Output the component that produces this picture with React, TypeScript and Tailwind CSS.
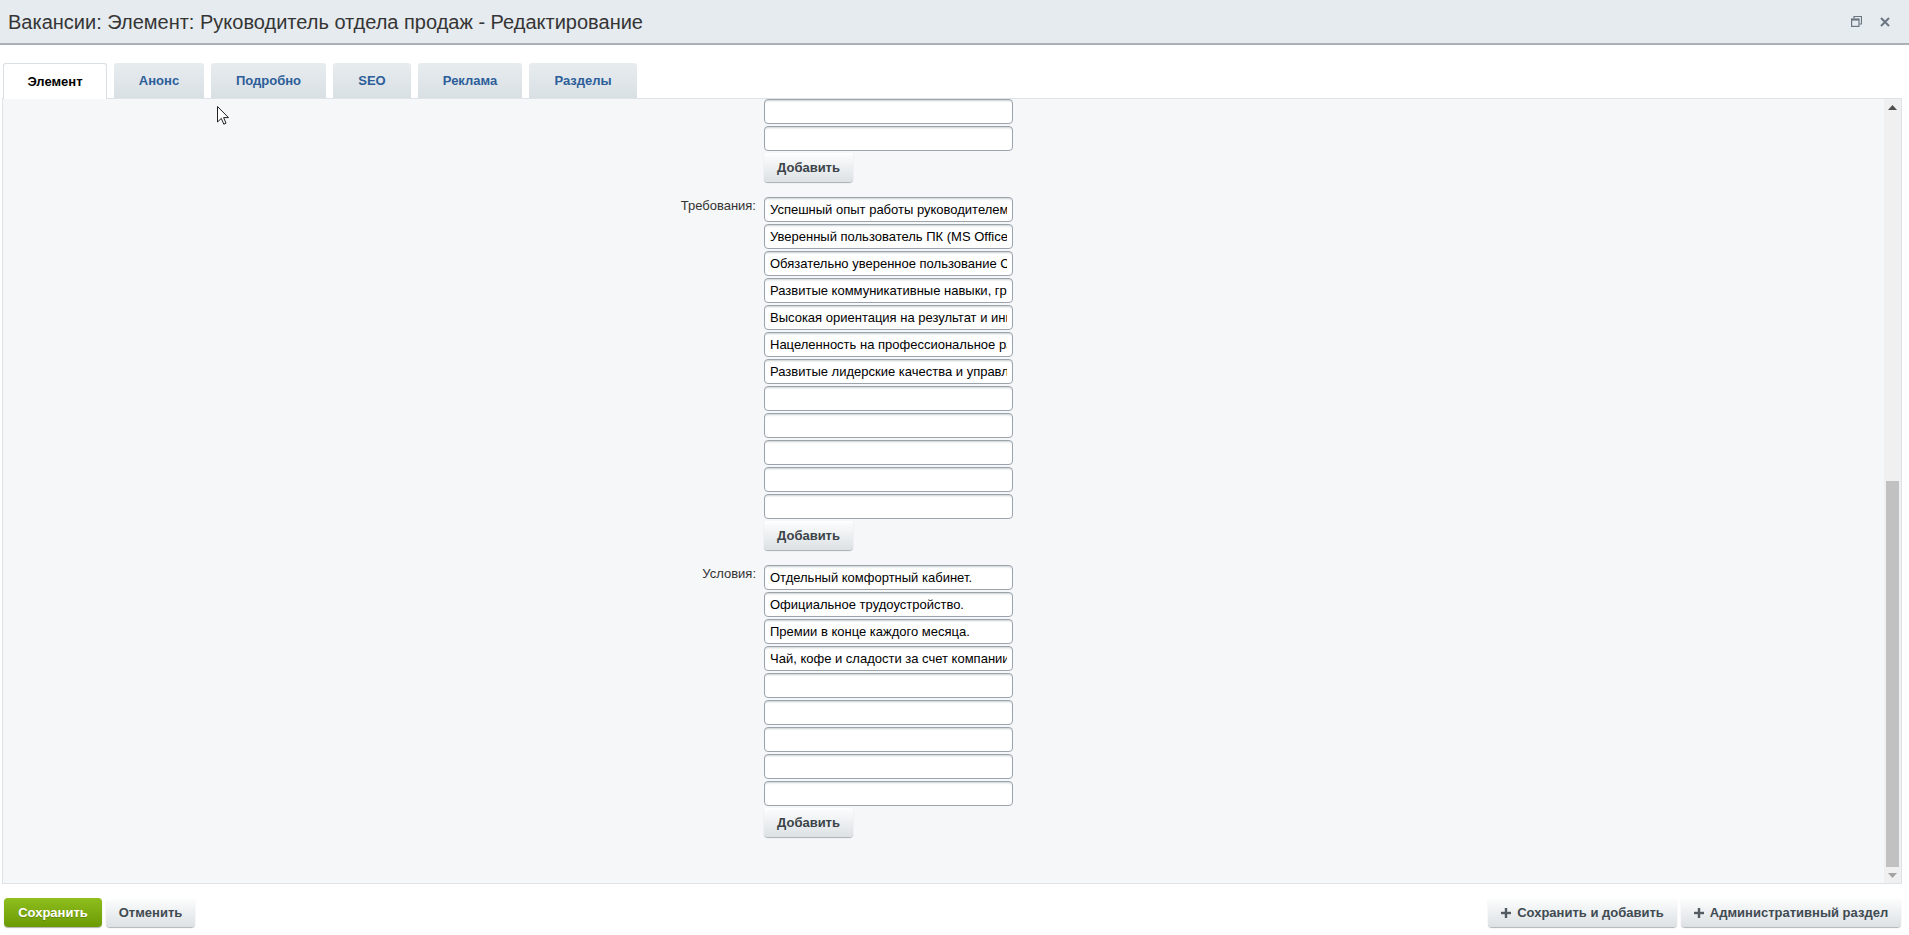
import React from "react";

const tabs = [
  { title: "Элемент", width: 104, active: true },
  { title: "Анонс", width: 90 },
  { title: "Подробно", width: 115 },
  { title: "SEO", width: 78 },
  { title: "Реклама", width: 104 },
  { title: "Разделы", width: 108 },
];

const requirements = [
  "Успешный опыт работы руководителем отдела продаж от 2 лет",
  "Уверенный пользователь ПК (MS Office, Excel)",
  "Обязательно уверенное пользование CRM-системами",
  "Развитые коммуникативные навыки, грамотная речь",
  "Высокая ориентация на результат и инициативность",
  "Нацеленность на профессиональное развитие",
  "Развитые лидерские качества и управленческие навыки",
  "",
  "",
  "",
  "",
  "",
];

const conditions = [
  "Отдельный комфортный кабинет.",
  "Официальное трудоустройство.",
  "Премии в конце каждого месяца.",
  "Чай, кофе и сладости за счет компании",
  "",
  "",
  "",
  "",
  "",
];

function Field({ value }: { value: string }) {
  return (
    <input
      type="text"
      readOnly
      defaultValue={value}
      className="mb-[2px] block h-[25px] w-[249px] rounded-[4px] border border-[#9ba4ad] bg-white px-[5px] text-[13px] text-black shadow-[inset_0_2px_2px_-1px_rgba(180,188,191,0.7)] outline-none"
    />
  );
}

function AddButton() {
  return (
    <button className="mt-[1px] mb-[15px] flex h-[29px] w-[89px] items-center justify-center rounded-[4px] bg-gradient-to-b from-[#fdfefe] to-[#dce1e4] text-[13px] font-bold text-[#3b4348] shadow-[0_1px_1px_rgba(0,0,0,0.3),inset_0_1px_0_#fff]">
      Добавить
    </button>
  );
}

function Section({ label, values }: { label: string; values: string[] }) {
  return (
    <div className="grid grid-cols-[753px_249px] gap-x-[8px]">
      <div className="pt-[1px] text-right text-[13px] leading-[15px] text-[#333]">{label}</div>
      <div>
        {values.map((v, i) => (
          <Field key={i} value={v} />
        ))}
        <AddButton />
      </div>
    </div>
  );
}

function Plus() {
  return (
    <svg width="10" height="10" viewBox="0 0 10 10" className="shrink-0">
      <rect x="3.8" y="0" width="2.4" height="10" fill="#535c63" />
      <rect x="0" y="3.8" width="10" height="2.4" fill="#535c63" />
    </svg>
  );
}

export default function App() {
  return (
    <div
      className="relative flex h-[935px] w-[1909px] flex-col overflow-hidden bg-white"
      style={{ fontFamily: '"Liberation Sans", Arial, sans-serif' }}
    >
      {/* title bar */}
      <div className="flex h-[45px] shrink-0 items-center justify-between border-b-2 border-[#aab0b5] bg-[#e5ebef] pl-[8px] pr-[19px]">
        <h1 className="text-[20px] leading-none text-[#353535]">
          Вакансии: Элемент: Руководитель отдела продаж - Редактирование
        </h1>
        <div className="flex items-center gap-[18px]">
          <svg width="11" height="11" viewBox="0 0 11 11">
            <path d="M3 2.5V0.5H10.5V8H8.5" fill="none" stroke="#6c7681" strokeWidth="1.2" />
            <rect x="0.6" y="3" width="7.4" height="7.4" fill="none" stroke="#6c7681" strokeWidth="1.2" />
            <rect x="0.6" y="3" width="7.4" height="1.6" fill="#6c7681" />
          </svg>
          <svg width="10" height="10" viewBox="0 0 10 10">
            <path d="M1 1L9 9M9 1L1 9" stroke="#6c7681" strokeWidth="2" />
          </svg>
        </div>
      </div>

      {/* tabs */}
      <div className="mt-[18px] flex h-[35px] shrink-0 items-end gap-[7px] pl-[3px]">
        {tabs.map((t) =>
          t.active ? (
            <div
              key={t.title}
              style={{ width: t.width }}
              className="relative z-10 -mb-[1px] flex h-[36px] items-center justify-center rounded-t-[3px] border border-b-0 border-[#d9dfe3] bg-white text-[13px] font-bold text-black"
            >
              {t.title}
            </div>
          ) : (
            <div
              key={t.title}
              style={{ width: t.width }}
              className="flex h-[35px] items-center justify-center rounded-t-[3px] bg-gradient-to-b from-[#e7ecef] to-[#d9e0e4] text-[13px] font-bold text-[#2d5e99]"
            >
              {t.title}
            </div>
          )
        )}
      </div>

      {/* content */}
      <div className="ml-[2px] mr-[7px] flex h-[786px] shrink-0 border border-[#dde3e7] bg-[#f5f7f9]">
        <div className="flex-1 overflow-hidden">
          <Section label="" values={["", ""]} />
          <Section label="Требования:" values={requirements} />
          <Section label="Условия:" values={conditions} />
        </div>
        <div className="flex w-[17px] flex-col bg-[#f0f0f0]">
          <div className="flex h-[17px] items-center justify-center">
            <svg width="9" height="5" viewBox="0 0 9 5">
              <path d="M0 5L4.5 0L9 5Z" fill="#505050" />
            </svg>
          </div>
          <div className="flex-1" />
          <div className="mx-[2px] h-[386px] bg-[#c1c1c1]" />
          <div className="flex h-[16px] items-center justify-center">
            <svg width="9" height="5" viewBox="0 0 9 5">
              <path d="M0 0L4.5 5L9 0Z" fill="#a3a3a3" />
            </svg>
          </div>
        </div>
      </div>

      {/* footer */}
      <div className="mt-[14px] flex items-start justify-between pl-[4px] pr-[8px]">
        <div className="flex gap-[4px]">
          <button className="flex h-[29px] w-[98px] items-center justify-center rounded-[4px] bg-gradient-to-b from-[#8fbe1d] to-[#6b9a03] text-[13px] font-bold text-white shadow-[0_1px_1px_rgba(0,0,0,0.3)] [text-shadow:0_1px_rgba(0,0,0,0.2)]">
            Сохранить
          </button>
          <button className="flex h-[29px] w-[89px] items-center justify-center rounded-[4px] bg-gradient-to-b from-[#fdfefe] to-[#dce1e4] text-[13px] font-bold text-[#3f4a51] shadow-[0_1px_1px_rgba(0,0,0,0.3),inset_0_1px_0_#fff]">
            Отменить
          </button>
        </div>
        <div className="flex gap-[4px]">
          <button className="flex h-[29px] w-[189px] items-center justify-center gap-[6px] rounded-[4px] bg-gradient-to-b from-[#fdfefe] to-[#dce1e4] text-[13px] font-bold text-[#3f4a51] shadow-[0_1px_1px_rgba(0,0,0,0.3),inset_0_1px_0_#fff]">
            <Plus />
            Сохранить и добавить
          </button>
          <button className="flex h-[29px] w-[220px] items-center justify-center gap-[6px] rounded-[4px] bg-gradient-to-b from-[#fdfefe] to-[#dce1e4] text-[13px] font-bold text-[#3f4a51] shadow-[0_1px_1px_rgba(0,0,0,0.3),inset_0_1px_0_#fff]">
            <Plus />
            Административный раздел
          </button>
        </div>
      </div>

      {/* mouse cursor */}
      <svg className="absolute left-[217px] top-[106px]" width="12" height="19" viewBox="0 0 12 19">
        <path d="M0.5 0.5V16L4.3 12.4L6.8 18.2L9 17.2L6.6 11.6H11.5Z" fill="#fff" stroke="#222" strokeWidth="1" strokeLinejoin="round" />
      </svg>
    </div>
  );
}
